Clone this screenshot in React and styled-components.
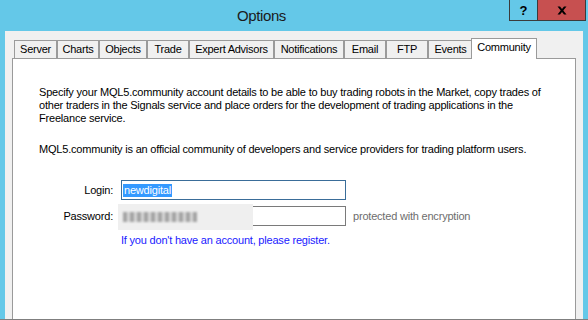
import React from "react";
import styled, { createGlobalStyle } from "styled-components";

const Global = createGlobalStyle`
  html, body { margin: 0; padding: 0; }
  body {
    width: 588px;
    height: 320px;
    overflow: hidden;
    font-family: "Liberation Sans", Arial, sans-serif;
  }
  * { box-sizing: border-box; }
`;

const Window = styled.div`
  width: 588px;
  height: 320px;
  background: #64c8e8;
  border-bottom: 1px solid #7f7f7f;
  display: flex;
  flex-direction: column;
`;

const TitleBar = styled.div`
  height: 31px;
  display: flex;
  align-items: flex-start;
  flex-shrink: 0;
`;

const Title = styled.div`
  flex: 1;
  height: 31px;
  line-height: 31px;
  padding-left: 14px;
  text-align: center;
  font-size: 15px;
  letter-spacing: -0.4px;
  color: #1b1b1b;
`;

const CaptionButtons = styled.div`
  display: flex;
  height: 21px;
  margin-right: 2px;
  border: 1px solid #3b3b3b;
  border-top: none;
`;

const CaptionButton = styled.div`
  width: ${(p) => p.$w}px;
  height: 20px;
  background: ${(p) => p.$bg};
  display: flex;
  align-items: center;
  justify-content: center;
  font-weight: bold;
  font-size: 13px;
  color: #000;
  & + & { border-left: 1px solid #3b3b3b; }
`;

const Client = styled.div`
  flex: 1;
  margin: 0 5px;
  background: #f0f0f0;
  padding: 7px 7px 0;
  display: flex;
  flex-direction: column;
  min-height: 0;
`;

const TabStrip = styled.div`
  position: relative;
  z-index: 1;
  display: flex;
  align-items: flex-end;
  height: 20px;
  padding-left: 2px;
  flex-shrink: 0;
`;

const Tab = styled.div`
  width: ${(p) => p.$w}px;
  height: ${(p) => (p.$active ? 21 : 18)}px;
  margin: ${(p) => (p.$active ? "0 -2px -1px -2px" : "0")};
  position: relative;
  z-index: ${(p) => (p.$active ? 2 : 1)};
  border: 1px solid #9a9a9a;
  border-bottom: none;
  background: ${(p) => (p.$active ? "#ffffff" : "#f0f0f0")};
  text-align: center;
  font-size: 11px;
  letter-spacing: -0.25px;
  line-height: 16px;
  color: #000;
  white-space: nowrap;
`;

const Panel = styled.div`
  flex: 1;
  background: #ffffff;
  border: 1px solid #9a9a9a;
  border-bottom: none;
  padding: 27px 20px 0 26px;
  font-size: 11px;
  letter-spacing: -0.2px;
  line-height: 13px;
  color: #000;
`;

const Paragraph = styled.p`
  margin: ${(p) => p.$mt || 0}px 0 0;
  white-space: nowrap;
`;

const Form = styled.div`
  margin-top: 24px;
  display: grid;
  grid-template-columns: 74px 225px auto;
  column-gap: 8px;
  row-gap: 6px;
  align-items: center;
`;

const Label = styled.div`
  text-align: right;
  white-space: nowrap;
`;

const Input = styled.div`
  position: relative;
  height: 20px;
  border: 1px solid ${(p) => (p.$focused ? "#3a6d99" : "#7a7a7a")};
  background: #fff;
  display: flex;
  align-items: center;
  padding-left: 1px;
`;

const Selection = styled.span`
  background: #3399ff;
  color: #fff;
  height: 13px;
  line-height: 13px;
  padding: 0 1px;
`;

const BlurPatch = styled.div`
  position: absolute;
  left: -4px;
  top: -3px;
  width: 135px;
  height: 26px;
  background: #efefef;
  filter: blur(0.6px);
`;

const BlurDots = styled.div`
  position: absolute;
  left: 5px;
  top: 8px;
  width: 74px;
  height: 10px;
  background: repeating-linear-gradient(
    90deg,
    #a4a4a4 0px,
    #a4a4a4 4px,
    #d6d6d6 4px,
    #d6d6d6 7px
  );
  filter: blur(1.3px);
`;

const Hint = styled.div`
  color: #6d6d6d;
  white-space: nowrap;
  margin-left: -1px;
`;

const Link = styled.a`
  grid-column: 2 / 4;
  color: #1a1aff;
  text-decoration: none;
  white-space: nowrap;
  margin-top: 2px;
`;

const tabs = [
  ["Server", 43],
  ["Charts", 42],
  ["Objects", 48],
  ["Trade", 42],
  ["Expert Advisors", 85],
  ["Notifications", 70],
  ["Email", 42],
  ["FTP", 42],
  ["Events", 45],
  ["Community", 66, true],
];

export default function App() {
  return (
    <>
      <Global />
      <Window>
        <TitleBar>
          <Title>Options</Title>
          <CaptionButtons>
            <CaptionButton $w={27} $bg="#64c8e8">?</CaptionButton>
            <CaptionButton $w={48} $bg="#c75050">
              <svg width="10" height="9" viewBox="0 0 10 9">
                <path d="M0.5 0.5 L3 0.5 L5 3 L7 0.5 L9.5 0.5 L6.3 4.5 L9.5 8.5 L7 8.5 L5 6 L3 8.5 L0.5 8.5 L3.7 4.5 Z" fill="#000" />
              </svg>
            </CaptionButton>
          </CaptionButtons>
        </TitleBar>
        <Client>
          <TabStrip>
            {tabs.map(([name, w, active]) => (
              <Tab key={name} $w={w} $active={active}>
                {name}
              </Tab>
            ))}
          </TabStrip>
          <Panel>
            <Paragraph>
              Specify your MQL5.community account details to be able to buy trading robots in the Market, copy trades of
              <br />
              other traders in the Signals service and place orders for the development of trading applications in the
              <br />
              Freelance service.
            </Paragraph>
            <Paragraph $mt={18}>
              MQL5.community is an official community of developers and service providers for trading platform users.
            </Paragraph>
            <Form>
              <Label>Login:</Label>
              <Input $focused>
                <Selection>newdigital</Selection>
              </Input>
              <div />
              <Label>Password:</Label>
              <Input>
                <BlurPatch>
                  <BlurDots />
                </BlurPatch>
              </Input>
              <Hint>protected with encryption</Hint>
              <Link>If you don't have an account, please register.</Link>
            </Form>
          </Panel>
        </Client>
      </Window>
    </>
  );
}
